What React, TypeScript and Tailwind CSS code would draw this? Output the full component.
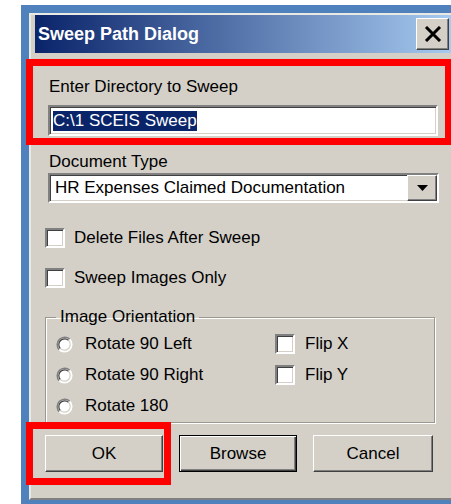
import React from "react";

const raised =
  "border border-t-white border-l-white border-b-[#404040] border-r-[#404040] shadow-[inset_-1px_-1px_0_#808080]";
const sunken =
  "border-2 border-t-[#808080] border-l-[#808080] border-b-white border-r-white shadow-[inset_1px_1px_0_#404040,inset_-1px_-1px_0_#d4d0c8]";

function CheckBox() {
  return <div className={`w-[20px] h-[20px] bg-white shrink-0 ${sunken}`} />;
}

function Radio() {
  return (
    <svg width="17" height="17" viewBox="0 0 17 17" className="shrink-0 w-[17px] h-[17px]">
      <circle cx="8.5" cy="8.5" r="7.5" fill="#ffffff" />
      <path d="M3.2 13.8 A7.5 7.5 0 0 1 13.8 3.2" fill="none" stroke="#808080" strokeWidth="1.5" />
      <path d="M4.4 12.6 A5.8 5.8 0 0 1 12.6 4.4" fill="none" stroke="#404040" strokeWidth="1.2" />
      <path d="M13.8 3.2 A7.5 7.5 0 0 1 3.2 13.8" fill="none" stroke="#ffffff" strokeWidth="1.5" />
      <path d="M12.6 4.4 A5.8 5.8 0 0 1 4.4 12.6" fill="none" stroke="#d4d0c8" strokeWidth="1.2" />
    </svg>
  );
}

function CheckRow({ label }: { label: string }) {
  return (
    <div className="flex items-center h-[20px]">
      <CheckBox />
      <span className="ml-[9px]">{label}</span>
    </div>
  );
}

export default function App() {
  return (
    <div className="relative w-[451px] h-[504px] overflow-hidden bg-white pt-[5px] pl-[21px] font-['Liberation_Sans',Arial,sans-serif] text-[17px] leading-[20px] text-black">
      {/* desktop window frame behind the dialog */}
      <div className="h-full bg-[#4f81bd] pl-[8px] pt-[8px]">
        <div className="w-[440px] h-[487px] bg-[#d4d0c8] border-l-2 border-t-2 border-[#ebe9e4] border-b-2 border-b-[#808080] pl-[4px] flex flex-col">
          {/* title bar */}
          <div className="w-[417px] h-[38px] shrink-0 flex items-center justify-between bg-[linear-gradient(90deg,#0a246a,#a6caf0)] pl-[3px] pr-[3px]">
            <span className="text-white font-bold text-[18px] leading-[22px]">Sweep Path Dialog</span>
            <div className={`w-[33px] h-[32px] bg-[#d4d0c8] flex items-center justify-center ${raised}`}>
              <svg width="18" height="16" viewBox="0 0 18 16">
                <path d="M2 1 L16 15 M16 1 L2 15" stroke="#000" strokeWidth="3" />
              </svg>
            </div>
          </div>

          {/* dialog body */}
          <div className="pl-[10px] w-[404px] flex flex-col">
            <div className="mt-[24px] ml-[4px] h-[20px]">Enter Directory to Sweep</div>
            <div className={`mt-[8px] ml-[3px] w-[390px] h-[31px] bg-white flex items-center pl-[3px] ${sunken}`}>
              <span className="bg-[#0a246a] text-white">C:\1 SCEIS Sweep</span>
            </div>

            <div className="mt-[16px] ml-[4px] h-[20px]">Document Type</div>
            <div className={`mt-[1px] ml-[3px] w-[391px] h-[30px] bg-white flex items-center ${sunken}`}>
              <span className="pl-[5px] flex-1">HR Expenses Claimed Documentation</span>
              <div className={`w-[30px] h-full bg-[#d4d0c8] flex items-center justify-center ${raised}`}>
                <svg width="11" height="6" viewBox="0 0 11 6">
                  <path d="M0 0 H11 L5.5 6 Z" fill="#000" />
                </svg>
              </div>
            </div>

            <div className="mt-[25px]">
              <CheckRow label="Delete Files After Sweep" />
            </div>
            <div className="mt-[20px]">
              <CheckRow label="Sweep Images Only" />
            </div>

            <fieldset className="mt-[19px] w-[390px] border border-[#9a978f] shadow-[inset_1px_1px_0_#fff,1px_1px_0_#fff] px-[10px] pt-[7px] pb-[6px]">
              <legend className="px-[4px] h-[20px]">Image Orientation</legend>
              <div className="grid grid-cols-[219px_1fr] gap-y-[11px]">
                <div className="flex items-center h-[20px]">
                  <Radio />
                  <span className="ml-[12px]">Rotate 90 Left</span>
                </div>
                <div className="flex items-center h-[20px]">
                  <CheckBox />
                  <span className="ml-[10px]">Flip X</span>
                </div>
                <div className="flex items-center h-[20px]">
                  <Radio />
                  <span className="ml-[12px]">Rotate 90 Right</span>
                </div>
                <div className="flex items-center h-[20px]">
                  <CheckBox />
                  <span className="ml-[10px]">Flip Y</span>
                </div>
                <div className="flex items-center h-[20px]">
                  <Radio />
                  <span className="ml-[12px]">Rotate 180</span>
                </div>
              </div>
            </fieldset>

            <div className="mt-[12px] w-[388px] flex justify-between">
              <div className={`w-[118px] h-[37px] bg-[#d4d0c8] flex items-center justify-center ${raised}`}>OK</div>
              <div className="w-[118px] h-[37px] bg-[#d4d0c8] flex items-center justify-center border border-black shadow-[inset_1px_1px_0_#fff,inset_-1px_-1px_0_#404040,inset_-2px_-2px_0_#808080]">
                Browse
              </div>
              <div className={`w-[120px] h-[37px] bg-[#d4d0c8] flex items-center justify-center ${raised}`}>Cancel</div>
            </div>
          </div>
        </div>
      </div>

      {/* red highlight frames drawn over the dialog */}
      <div className="absolute left-[26px] top-[59px] w-[426px] h-[86px] border-[7px] border-[#ff0000] pointer-events-none" />
      <div className="absolute left-[26px] top-[422px] w-[145px] h-[63px] border-[7px] border-[#ff0000] pointer-events-none" />
    </div>
  );
}
